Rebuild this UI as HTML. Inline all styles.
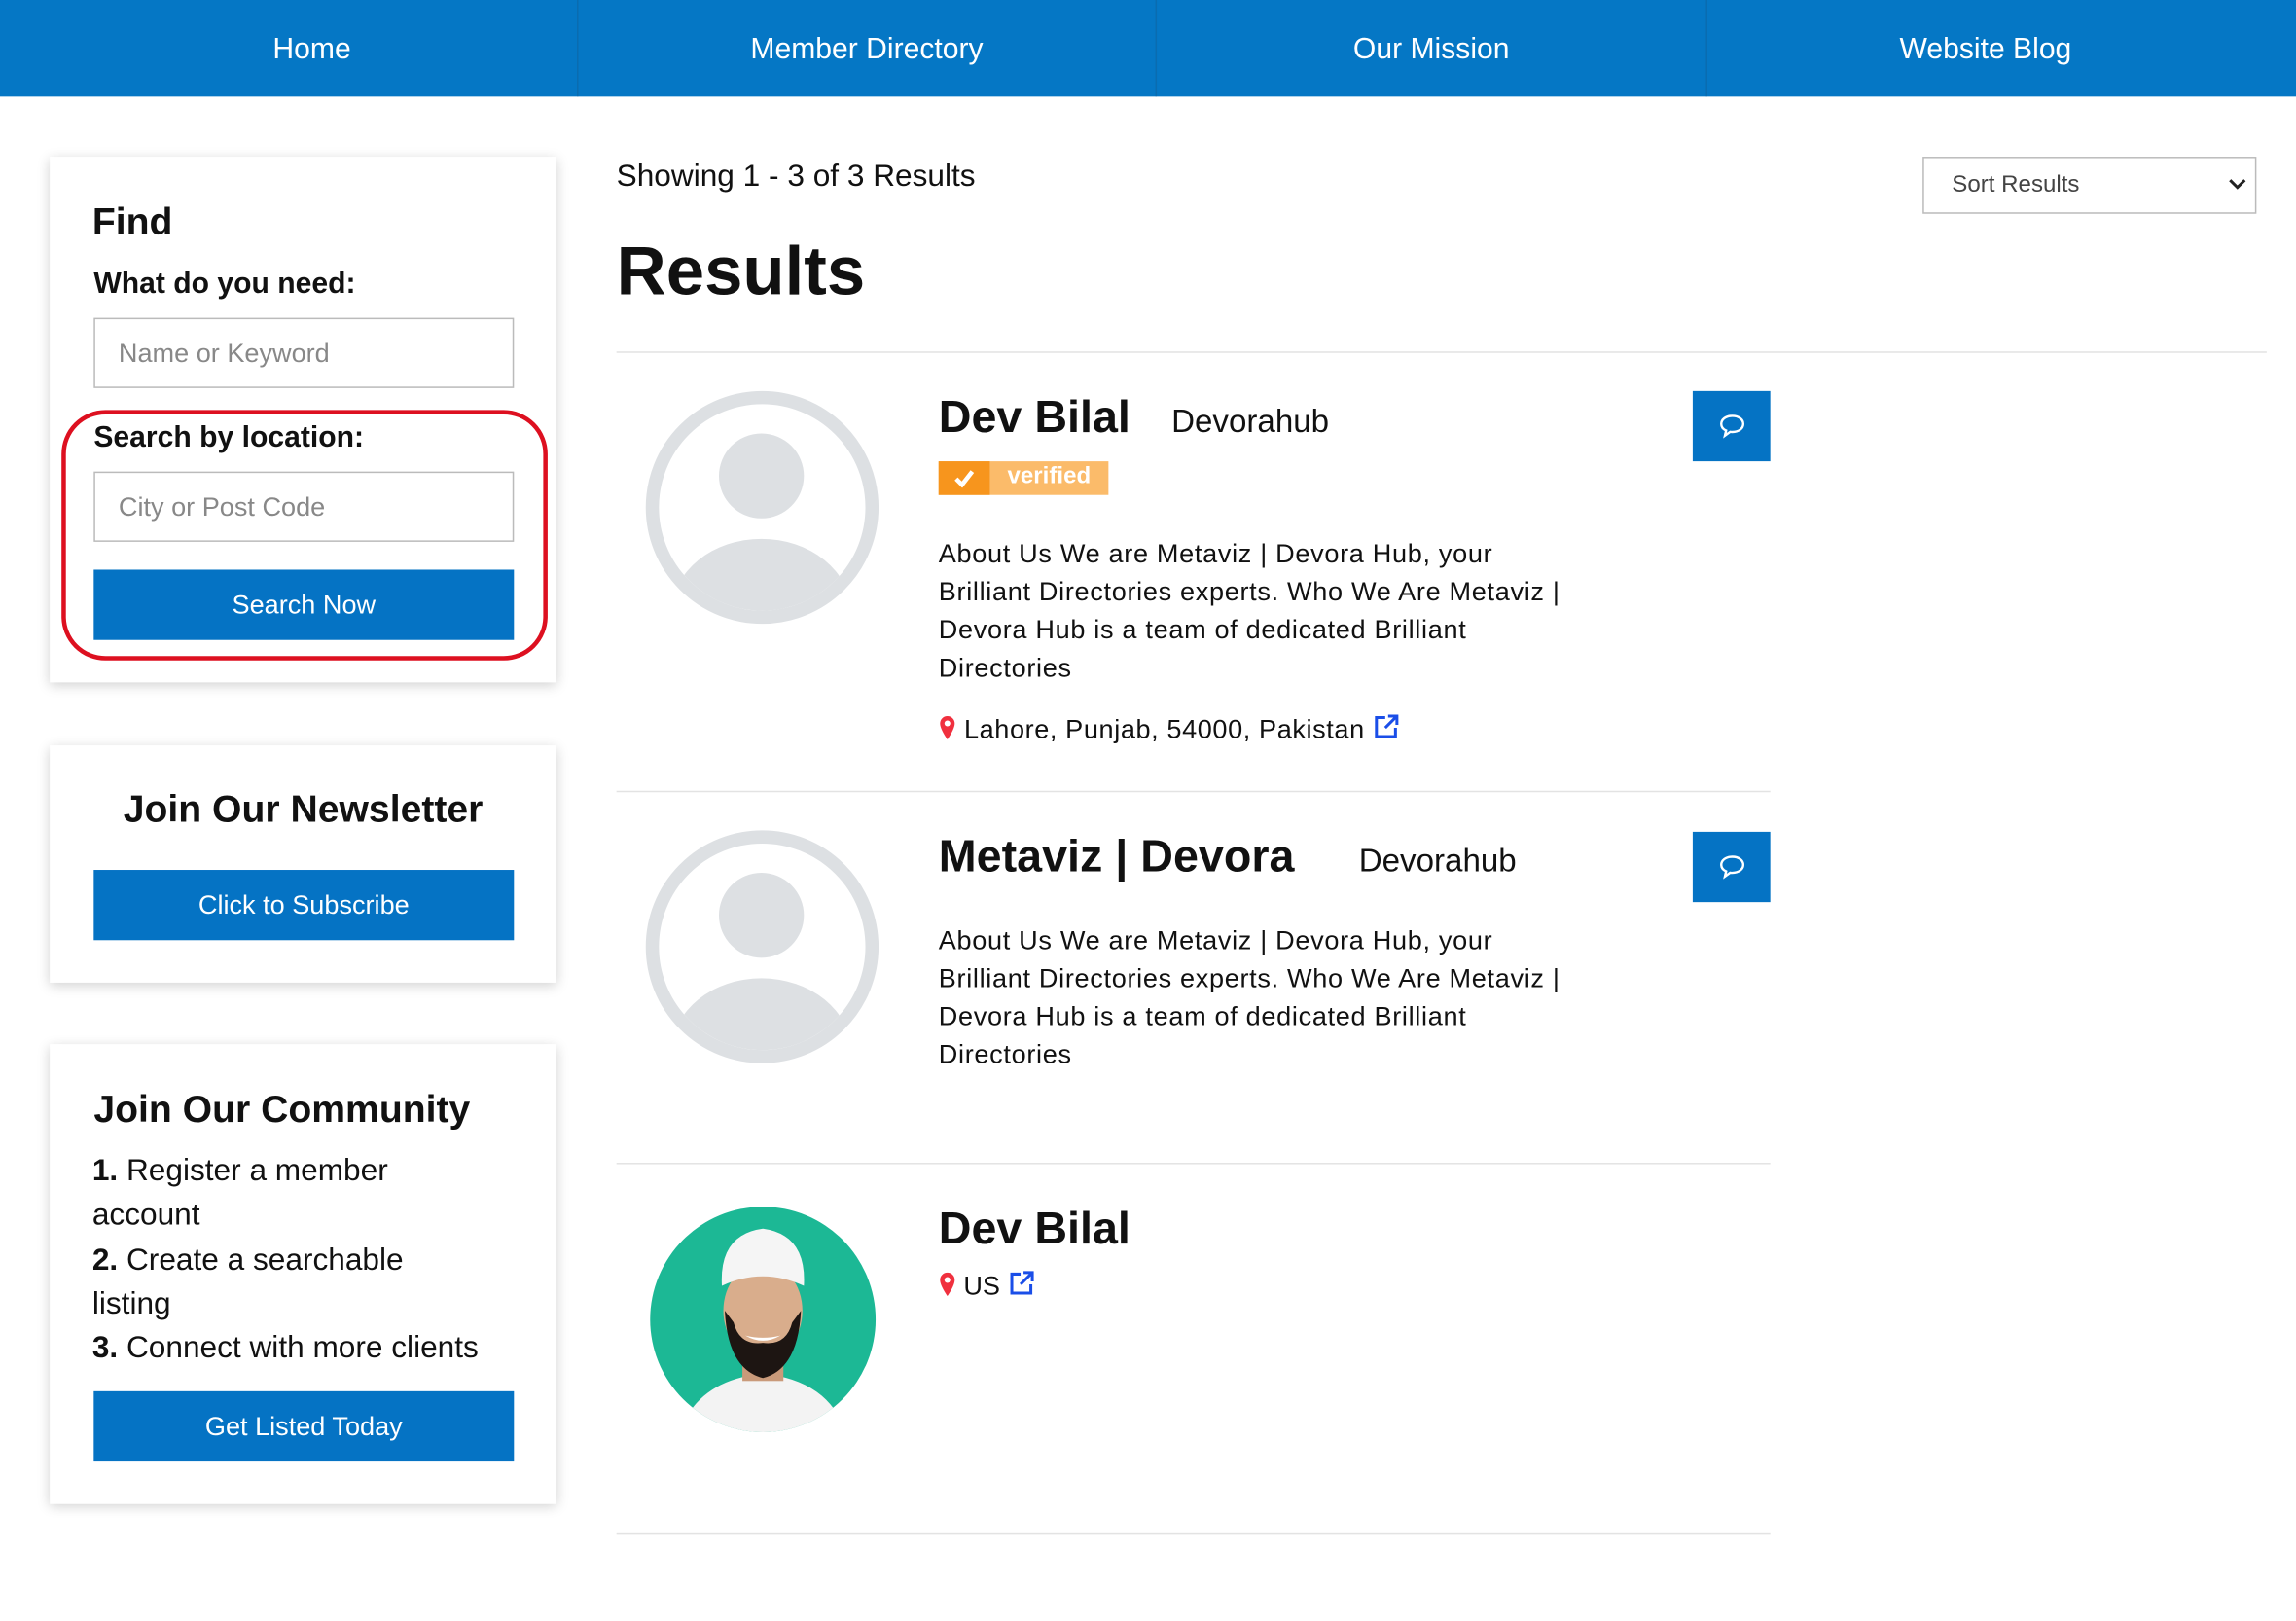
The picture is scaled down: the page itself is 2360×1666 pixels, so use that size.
<!DOCTYPE html>
<html><head><meta charset="utf-8"><style>
*{box-sizing:border-box;margin:0;padding:0}
html,body{width:2360px;height:1666px;overflow:hidden;background:#fff}
#w{width:1568px;height:1107px;transform:scale(1.5051);transform-origin:0 0;position:relative;font-family:"Liberation Sans",sans-serif;color:#111}
.a{position:absolute;white-space:nowrap}
.nav{position:absolute;left:0;top:0;width:1568px;height:66px;background:#0577c5;overflow:hidden}
.nav .t{position:absolute;top:1px;height:66px;line-height:66px;color:#fff;font-size:20px;text-align:center}
.sep{position:absolute;top:0;width:1px;height:66px;background:#0a6cb0}
.card{position:absolute;left:34px;width:346px;background:#fff;box-shadow:0 2px 8px rgba(0,0,0,.18)}
.inp{position:absolute;left:64px;width:287px;height:48px;border:1px solid #bbb;color:#888;font-size:18px;line-height:46px;padding-left:16px}
.btn{position:absolute;left:64px;width:287px;height:48px;background:#0573c4;color:#fff;font-size:18px;line-height:48px;text-align:center}
.b{font-weight:bold}
.hr{position:absolute;height:1px;background:#e3e3e3}
.chat{position:absolute;left:1156px;width:53px;height:48px;background:#0573c4}
.desc{position:absolute;left:641px;font-size:18px;line-height:26px;color:#111;letter-spacing:0.45px}
.av{position:absolute;left:441px;width:159px;height:159px;border-radius:50%;border:9px solid #dde0e3;overflow:hidden;background:#fff}
.av .h{position:absolute;left:41px;top:20px;width:58px;height:58px;border-radius:50%;background:#dde0e3}
.av .bd{position:absolute;left:9px;top:92px;width:122px;height:90px;border-radius:50%/55% 55% 45% 45%;background:#dde0e3}
</style></head><body><div id="w">
<div class="nav">
<div class="t" style="left:16px;width:394px">Home</div><div class="sep" style="left:394px"></div>
<div class="t" style="left:395px;width:394px">Member Directory</div><div class="sep" style="left:789px"></div>
<div class="t" style="left:790px;width:375px">Our Mission</div><div class="sep" style="left:1165px"></div>
<div class="t" style="left:1166px;width:380px">Website Blog</div>
</div>

<div class="card" style="top:107px;height:359px"></div>
<div class="a b" style="left:63px;top:136px;font-size:26px">Find</div>
<div class="a b" style="left:64px;top:183px;font-size:20px">What do you need:</div>
<div class="inp" style="top:217px">Name or Keyword</div>
<div class="a b" style="left:64px;top:288px;font-size:20px">Search by location:</div>
<div class="inp" style="top:322px">City or Post Code</div>
<div class="btn" style="top:389px">Search Now</div>
<div class="a" style="left:42px;top:280px;width:332px;height:171px;border:3px solid #dd1020;border-radius:30px"></div>

<div class="card" style="top:509px;height:162px"></div>
<div class="a b" style="left:34px;width:346px;text-align:center;top:537px;font-size:26px">Join Our Newsletter</div>
<div class="btn" style="top:594px">Click to Subscribe</div>

<div class="card" style="top:713px;height:314px"></div>
<div class="a b" style="left:64px;top:742px;font-size:26px">Join Our Community</div>
<div class="a" style="left:63px;top:785px;font-size:21px;line-height:30.3px"><b>1.</b> Register a member<br>account<br><b>2.</b> Create a searchable<br>listing<br><b>3.</b> Connect with more clients</div>
<div class="btn" style="top:950px">Get Listed Today</div>

<div class="a" style="left:421px;top:109px;font-size:21px">Showing 1 - 3 of 3 Results</div>
<div class="a b" style="left:421px;top:157px;font-size:47px">Results</div>
<div class="a" style="left:1313px;top:107px;width:228px;height:39px;border:1px solid #bbb;font-size:16px;color:#444;line-height:37px;padding-left:19px">Sort Results<svg style="position:absolute;right:6px;top:13px" width="12" height="10" viewBox="0 0 12 10"><path d="M1 2l5 5 5-5" fill="none" stroke="#222" stroke-width="2"/></svg></div>
<div class="hr" style="left:421px;top:240px;width:1127px"></div>

<div class="av" style="top:267px"><div class="h"></div><div class="bd"></div></div>
<div class="a b" style="left:641px;top:267px;font-size:31px">Dev Bilal</div>
<div class="a" style="left:800px;top:275px;font-size:22px">Devorahub</div>
<div class="chat" style="top:267px"><svg style="position:absolute;left:17px;top:15px" width="20" height="18" viewBox="0 0 20 18"><path d="M10 2C5.5 2 2.5 4.5 2.5 7.5c0 2 1.3 3.6 3.3 4.5L5 15.5l3.6-2.6c.5.1.9.1 1.4.1 4.5 0 7.5-2.5 7.5-5.5S14.5 2 10 2z" fill="none" stroke="#fff" stroke-width="1.6"/></svg></div>
<div class="a" style="left:641px;top:315px;width:116px;height:23px;background:#fbbb6a"><div style="position:absolute;left:0;top:0;width:35px;height:23px;background:#f7951d"><svg style="position:absolute;left:10px;top:5px" width="15" height="13" viewBox="0 0 15 13"><path d="M2 7l4 4 7-9" fill="none" stroke="#fff" stroke-width="3"/></svg></div><span style="position:absolute;left:47px;top:2px;color:#fff;font-size:16px;font-weight:bold">verified</span></div>
<div class="desc" style="top:365px">About Us We are Metaviz | Devora Hub, your<br>Brilliant Directories experts. Who We Are Metaviz |<br>Devora Hub is a team of dedicated Brilliant<br>Directories</div>
<div class="a" style="left:641px;top:487px;font-size:18px;letter-spacing:0.4px"><svg width="12" height="18" viewBox="0 0 12 18" style="vertical-align:-2px"><path d="M6 1a5 5 0 0 0-5 5c0 4 5 11 5 11s5-7 5-11a5 5 0 0 0-5-5z" fill="#f0303e"/><circle cx="6" cy="6" r="2" fill="#fff"/></svg> Lahore, Punjab, 54000, Pakistan <svg width="20" height="18" viewBox="0 0 20 18" style="vertical-align:-1px"><path d="M9 3H3v13h13v-6M11 2h6v6M17 2l-8 8" fill="none" stroke="#1a4ee8" stroke-width="2"/></svg></div>
<div class="hr" style="left:421px;top:540px;width:788px"></div>

<div class="av" style="top:567px"><div class="h"></div><div class="bd"></div></div>
<div class="a b" style="left:641px;top:567px;font-size:31px">Metaviz | Devora</div>
<div class="a" style="left:928px;top:575px;font-size:22px">Devorahub</div>
<div class="chat" style="top:568px"><svg style="position:absolute;left:17px;top:15px" width="20" height="18" viewBox="0 0 20 18"><path d="M10 2C5.5 2 2.5 4.5 2.5 7.5c0 2 1.3 3.6 3.3 4.5L5 15.5l3.6-2.6c.5.1.9.1 1.4.1 4.5 0 7.5-2.5 7.5-5.5S14.5 2 10 2z" fill="none" stroke="#fff" stroke-width="1.6"/></svg></div>
<div class="desc" style="top:629px">About Us We are Metaviz | Devora Hub, your<br>Brilliant Directories experts. Who We Are Metaviz |<br>Devora Hub is a team of dedicated Brilliant<br>Directories</div>
<div class="hr" style="left:421px;top:794px;width:788px"></div>

<svg class="a" style="left:443px;top:823px" width="156" height="156" viewBox="0 0 156 156">
<defs><clipPath id="c"><circle cx="78" cy="78" r="77"/></clipPath></defs>
<g clip-path="url(#c)">
<rect width="156" height="156" fill="#1cb895"/>
<path d="M20 160 Q30 120 78 115 Q126 120 136 160z" fill="#f3f3f3"/>
<rect x="64" y="95" width="28" height="25" fill="#c99a7a"/>
<ellipse cx="78" cy="72" rx="27" ry="33" fill="#d9ad8c"/>
<path d="M52 72 Q54 112 78 118 Q102 112 104 72 L98 80 Q94 96 78 94 Q62 96 58 80z" fill="#1d1512"/>
<path d="M66 89 Q78 96 90 89 Q78 92 66 89z" fill="#fff"/>
<path d="M50 55 Q48 20 78 16 Q108 20 106 55 Q78 42 50 55z" fill="#f5f5f5"/>
</g></svg>
<div class="a b" style="left:641px;top:821px;font-size:31px">Dev Bilal</div>
<div class="a" style="left:641px;top:867px;font-size:18px"><svg width="12" height="18" viewBox="0 0 12 18" style="vertical-align:-2px"><path d="M6 1a5 5 0 0 0-5 5c0 4 5 11 5 11s5-7 5-11a5 5 0 0 0-5-5z" fill="#f0303e"/><circle cx="6" cy="6" r="2" fill="#fff"/></svg> US <svg width="20" height="18" viewBox="0 0 20 18" style="vertical-align:-1px"><path d="M9 3H3v13h13v-6M11 2h6v6M17 2l-8 8" fill="none" stroke="#1a4ee8" stroke-width="2"/></svg></div>
<div class="hr" style="left:421px;top:1047px;width:788px"></div>
</div></body></html>
